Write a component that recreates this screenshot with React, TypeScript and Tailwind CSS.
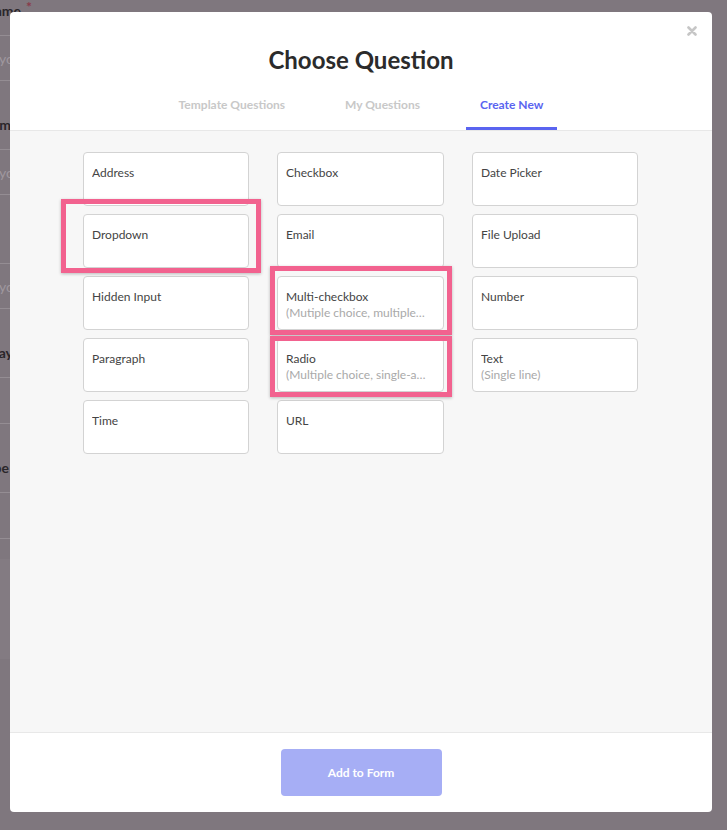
import React from "react";

const font = { fontFamily: "Lato, 'Open Sans', Arial, sans-serif" };

type Card = { label: string; sub?: string };

const cards: Card[] = [
  { label: "Address" },
  { label: "Checkbox" },
  { label: "Date Picker" },
  { label: "Dropdown" },
  { label: "Email" },
  { label: "File Upload" },
  { label: "Hidden Input" },
  { label: "Multi-checkbox", sub: "(Mutiple choice, multiple-answer)" },
  { label: "Number" },
  { label: "Paragraph" },
  { label: "Radio", sub: "(Multiple choice, single-answer)" },
  { label: "Text", sub: "(Single line)" },
  { label: "Time" },
  { label: "URL" },
];

function BackgroundForm() {
  return (
    <div className="ml-[-100px] w-[420px] flex flex-col pt-[1px]">
      <div className="flex flex-col mb-[34px]">
        <div className="relative w-[121px] text-right text-[14px] leading-5 font-bold text-[#2a262a]">
          Name
          <span className="absolute left-full ml-[5px] top-[-4px] text-[#8a3a4a]">*</span>
        </div>
        <div className="mt-[14px] h-[46px] border-y border-[#948d93] flex items-center pl-[99px] text-[14px] text-[#9f989e]">
          your name
        </div>
      </div>
      <div className="flex flex-col mb-[34px]">
        <div className="w-[111px] text-right text-[14px] leading-5 font-bold text-[#2a262a]">Platform</div>
        <div className="mt-[14px] h-[46px] border-y border-[#948d93] flex items-center pl-[99px] text-[14px] text-[#9f989e]">
          your platform
        </div>
      </div>
      <div className="flex flex-col mb-[34px]">
        <div className="w-[98px] text-right text-[14px] leading-5 font-bold text-[#2a262a]">Website</div>
        <div className="mt-[14px] h-[46px] border-y border-[#948d93] flex items-center pl-[99px] text-[14px] text-[#9f989e]">
          your website
        </div>
      </div>
      <div className="flex flex-col mb-[34px]">
        <div className="w-[113px] text-right text-[14px] leading-5 font-bold text-[#2a262a]">Birthday</div>
        <div className="mt-[14px] h-[47px] border-y border-[#948d93]" />
      </div>
      <div className="flex flex-col mb-[20px]">
        <div className="w-[109px] text-right text-[14px] leading-5 font-bold text-[#2a262a]">Phone Type</div>
        <div className="mt-[14px] h-[47px] border-y border-[#948d93]" />
      </div>
      <div className="ml-[100px] w-[20px] h-[100px] bg-[#837b82]" />
    </div>
  );
}

function QuestionCard({ card }: { card: Card }) {
  return (
    <div className="h-[54px] bg-white border border-[#d3d3d3] rounded-[4px] pl-[8px] pr-[14px] pt-[12px] flex flex-col min-w-0">
      <div className="text-[12px] leading-4 text-[#444444] truncate">{card.label}</div>
      {card.sub && (
        <div className="text-[12px] leading-4 text-[#a9a9a9] truncate">{card.sub}</div>
      )}
    </div>
  );
}

export default function App() {
  return (
    <div className="relative w-full h-[830px] bg-[#7f777e] overflow-hidden" style={font}>
      <BackgroundForm />

      <div className="absolute left-[10px] top-[12px] w-[702px] h-[800px] bg-white rounded-[4px] flex flex-col overflow-hidden">
        <button className="absolute right-[15px] top-[14px] w-[10px] h-[10px] flex items-center justify-center">
          <svg width="10" height="10" viewBox="0 0 10 10">
            <path d="M1.5 1.5 L8.5 8.5 M8.5 1.5 L1.5 8.5" stroke="#c6c6c6" strokeWidth="2.6" strokeLinecap="round" />
          </svg>
        </button>

        <div className="h-[119px] shrink-0 border-b border-[#e8e8e8] flex flex-col items-center pt-[32px]">
          <h1 className="text-[24px] leading-8 font-bold text-[#2b2b2b]">Choose Question</h1>
          <div className="mt-[21px] flex gap-[32px]">
            <div className="px-[14px] pb-[14px] border-b-[3px] border-transparent text-[12px] leading-4 font-bold text-[#c8c8c8]">
              Template Questions
            </div>
            <div className="px-[14px] pb-[14px] border-b-[3px] border-transparent text-[12px] leading-4 font-bold text-[#c8c8c8]">
              My Questions
            </div>
            <div className="px-[14px] pb-[14px] border-b-[3px] border-[#5a64f0] text-[12px] leading-4 font-bold text-[#5a64f0]">
              Create New
            </div>
          </div>
        </div>

        <div className="flex-1 bg-[#f7f7f7] pt-[21px] pl-[73px]">
          <div className="grid grid-cols-[166px_167px_166px] gap-x-[28px] gap-y-[8px] justify-start">
            {cards.map((c) => (
              <QuestionCard key={c.label} card={c} />
            ))}
          </div>
        </div>

        <div className="h-[80px] shrink-0 border-t border-[#e8e8e8] flex items-center justify-center">
          <button className="w-[161px] h-[47px] rounded-[4px] bg-[#a6aef5] text-white text-[12px] font-bold">
            Add to Form
          </button>
        </div>
      </div>

      <div className="absolute left-[61px] top-[199px] w-[200px] h-[74px] border-[5px] border-[#f2628f] shadow-[0_1px_3px_rgba(0,0,0,0.25)]" />
      <div className="absolute left-[270px] top-[266px] w-[182px] h-[69px] border-[5px] border-[#f2628f] shadow-[0_1px_3px_rgba(0,0,0,0.25)]" />
      <div className="absolute left-[270px] top-[336px] w-[182px] h-[61px] border-[5px] border-[#f2628f] shadow-[0_1px_3px_rgba(0,0,0,0.25)]" />
    </div>
  );
}
